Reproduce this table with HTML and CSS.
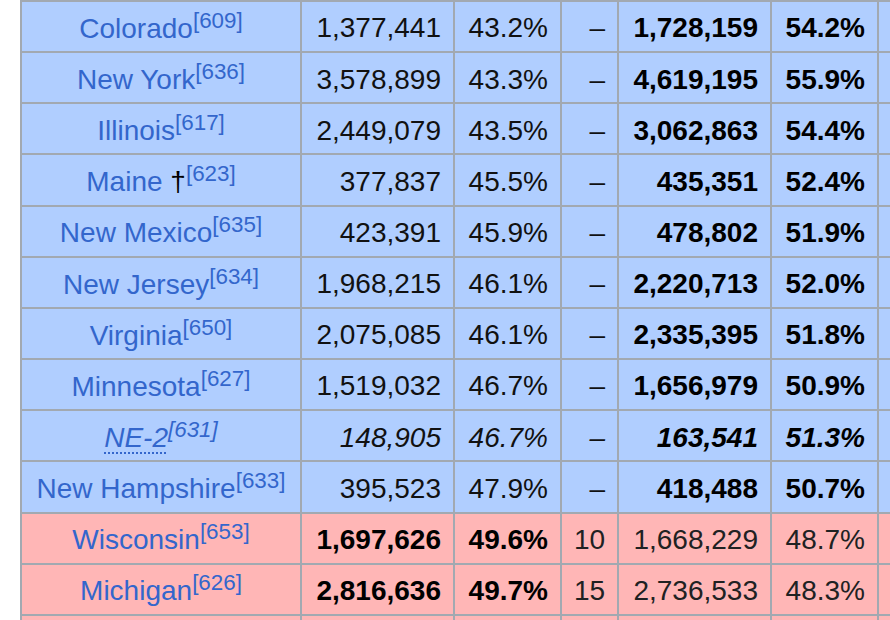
FILE: index.html
```html
<!DOCTYPE html>
<html lang="en">
<head>
<meta charset="utf-8">
<title>Results by state</title>
<link rel="stylesheet" href="styles.css">
</head>
<body>
<table class="results">
  <colgroup>
    <col class="c-state">
    <col class="c-votes">
    <col class="c-pct">
    <col class="c-ev">
    <col class="c-votes">
    <col class="c-pct">
    <col class="c-more">
  </colgroup>
  <tbody>
    <tr class="dem">
      <td class="state"><a href="#">Colorado</a><sup class="ref"><a href="#">[609]</a></sup></td>
      <td>1,377,441</td><td>43.2%</td><td>–</td><td class="b">1,728,159</td><td class="b">54.2%</td><td></td>
    </tr>
    <tr class="dem">
      <td class="state"><a href="#">New York</a><sup class="ref"><a href="#">[636]</a></sup></td>
      <td>3,578,899</td><td>43.3%</td><td>–</td><td class="b">4,619,195</td><td class="b">55.9%</td><td></td>
    </tr>
    <tr class="dem">
      <td class="state"><a href="#">Illinois</a><sup class="ref"><a href="#">[617]</a></sup></td>
      <td>2,449,079</td><td>43.5%</td><td>–</td><td class="b">3,062,863</td><td class="b">54.4%</td><td></td>
    </tr>
    <tr class="dem">
      <td class="state"><a href="#">Maine</a> <span class="dagger">†</span><sup class="ref"><a href="#">[623]</a></sup></td>
      <td>377,837</td><td>45.5%</td><td>–</td><td class="b">435,351</td><td class="b">52.4%</td><td></td>
    </tr>
    <tr class="dem">
      <td class="state"><a href="#">New Mexico</a><sup class="ref"><a href="#">[635]</a></sup></td>
      <td>423,391</td><td>45.9%</td><td>–</td><td class="b">478,802</td><td class="b">51.9%</td><td></td>
    </tr>
    <tr class="dem">
      <td class="state"><a href="#">New Jersey</a><sup class="ref"><a href="#">[634]</a></sup></td>
      <td>1,968,215</td><td>46.1%</td><td>–</td><td class="b">2,220,713</td><td class="b">52.0%</td><td></td>
    </tr>
    <tr class="dem">
      <td class="state"><a href="#">Virginia</a><sup class="ref"><a href="#">[650]</a></sup></td>
      <td>2,075,085</td><td>46.1%</td><td>–</td><td class="b">2,335,395</td><td class="b">51.8%</td><td></td>
    </tr>
    <tr class="dem">
      <td class="state"><a href="#">Minnesota</a><sup class="ref"><a href="#">[627]</a></sup></td>
      <td>1,519,032</td><td>46.7%</td><td>–</td><td class="b">1,656,979</td><td class="b">50.9%</td><td></td>
    </tr>
    <tr class="dem district">
      <td class="state"><a href="#"><abbr title="Nebraska's 2nd congressional district">NE-2</abbr></a><sup class="ref"><a href="#">[631]</a></sup></td>
      <td>148,905</td><td>46.7%</td><td>–</td><td class="b">163,541</td><td class="b">51.3%</td><td></td>
    </tr>
    <tr class="dem">
      <td class="state"><a href="#">New Hampshire</a><sup class="ref"><a href="#">[633]</a></sup></td>
      <td>395,523</td><td>47.9%</td><td>–</td><td class="b">418,488</td><td class="b">50.7%</td><td></td>
    </tr>
    <tr class="rep">
      <td class="state"><a href="#">Wisconsin</a><sup class="ref"><a href="#">[653]</a></sup></td>
      <td class="b">1,697,626</td><td class="b">49.6%</td><td>10</td><td>1,668,229</td><td>48.7%</td><td></td>
    </tr>
    <tr class="rep">
      <td class="state"><a href="#">Michigan</a><sup class="ref"><a href="#">[626]</a></sup></td>
      <td class="b">2,816,636</td><td class="b">49.7%</td><td>15</td><td>2,736,533</td><td>48.3%</td><td></td>
    </tr>
    <tr class="rep">
      <td class="state"></td>
      <td></td><td></td><td></td><td></td><td></td><td></td>
    </tr>
  </tbody>
</table>
</body>
</html>
```

FILE: styles.css
```css
html, body {
  overflow: hidden;
}

body {
  margin: 0;
  padding: 0 0 0 20px;
  background: #ffffff;
  font-family: "Liberation Sans", Arial, sans-serif;
}

.results {
  border-collapse: separate;
  border-spacing: 0;
  table-layout: fixed;
  width: 918px;
  border-left: 2px solid #a2a9b1;
  border-top: 2px solid #a2a9b1;
  font-size: 28px;
  color: #202122;
}

.c-state { width: 280px; }
.c-votes { width: 153px; }
.c-pct { width: 107px; }
.c-ev { width: 57px; }
.c-more { width: 60px; }

.results td {
  box-sizing: border-box;
  height: 51.17px;
  padding: 4px 12px 0;
  border-right: 2px solid #a2a9b1;
  border-bottom: 2px solid #a2a9b1;
  text-align: right;
  vertical-align: middle;
  white-space: nowrap;
  line-height: 1.3;
}

.results td.state {
  text-align: center;
  padding: 4px 6px 0;
}

.results td.b {
  font-weight: bold;
  color: #000000;
}

.dem td { background: #b0ceff; }
.rep td { background: #ffb6b6; }

.dem td:not(.state) { color: #111111; }
.dem td.b { color: #000000; }

.results a {
  color: #3366cc;
  text-decoration: none;
}

.ref {
  font-size: 0.8em;
  line-height: 1;
  vertical-align: super;
}

.dagger {
  color: #000000;
}

.district td {
  font-style: italic;
}

.district abbr {
  text-decoration: underline dotted;
  text-decoration-thickness: 2px;
  text-underline-offset: 5px;
}
```
